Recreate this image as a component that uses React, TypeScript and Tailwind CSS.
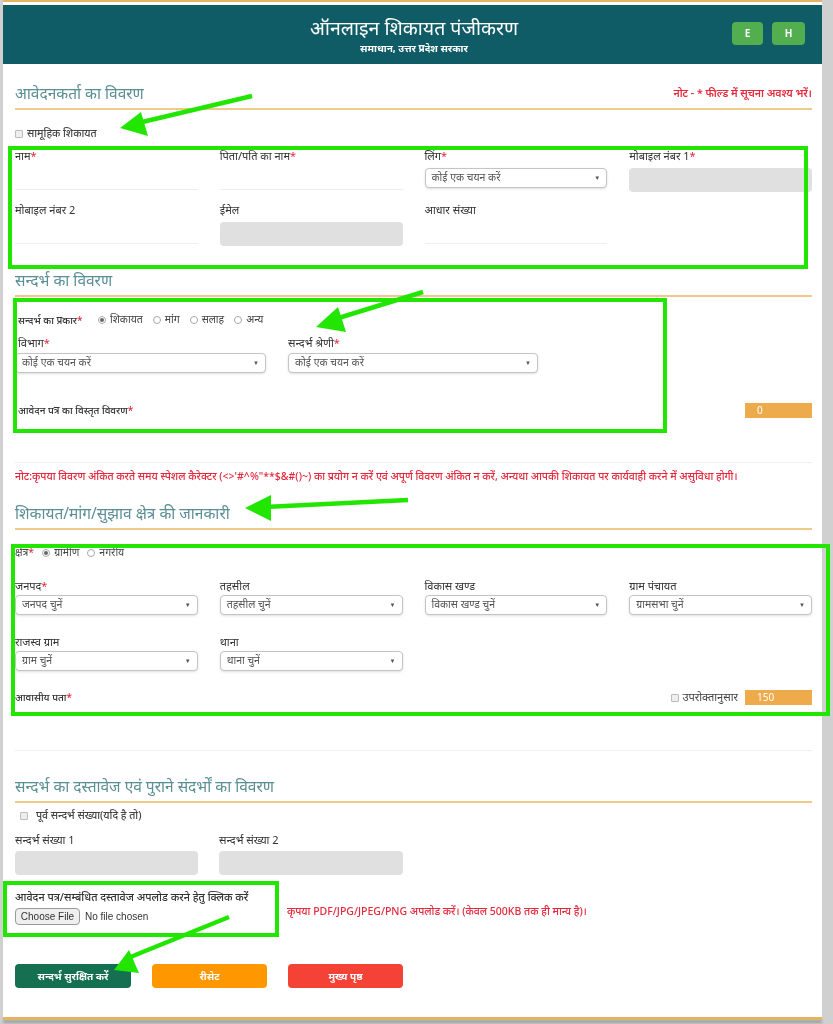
const font = { fontFamily: '"Noto Sans", "Noto Sans Devanagari", "Lohit Devanagari", "Liberation Sans", sans-serif' };

function Heading({ text, note }: { text: string; note?: boolean }) {
  return (
    <div className="flex h-[30px] items-center justify-between border-b-2 border-[#eecb8a]">
      <h2 className="text-[15.5px] font-normal text-[#5a8f95]">{text}</h2>
      {note && <p className="text-[10.5px] font-semibold text-[#e5283c]">नोट - * फील्ड में सूचना अवश्य भरें।</p>}
    </div>
  );
}

function Label({ text, req }: { text: string; req?: boolean }) {
  return (
    <p className="h-[15px] text-[11px] leading-[15px] text-[#333]">
      {text}
      {req && <span className="text-[#e5283c]">*</span>}
    </p>
  );
}

function Select({ text, className = "" }: { text: string; className?: string }) {
  return (
    <div className={`flex h-[20px] items-center justify-between rounded-sm border border-[#c4c4c4] bg-white px-1.5 shadow-sm ${className}`}>
      <span className="text-[10.5px] text-[#555]">{text}</span>
      <span className="text-[6px] text-[#555]">▼</span>
    </div>
  );
}

function Underline() {
  return <div className="mt-[9px] h-[18px] border-b border-[#eeeeee]" />;
}

function Disabled() {
  return <div className="h-[24px] rounded-sm bg-[#e0e0e0]" />;
}

function Radio({ text, on }: { text: string; on?: boolean }) {
  return (
    <span className="flex items-center gap-1 text-[10.5px] text-[#444]">
      <span className="flex h-[8px] w-[8px] items-center justify-center rounded-full border border-[#aaa] bg-white">
        {on && <span className="h-[4px] w-[4px] rounded-full bg-[#666]" />}
      </span>
      {text}
    </span>
  );
}

function Box() {
  return <span className="h-[8px] w-[8px] rounded-[1px] border border-[#bbb] bg-[#eee]" />;
}

function Counter({ value }: { value: string }) {
  return <div className="flex h-[15px] w-[67px] items-center bg-[#eeab4b] pl-3 text-[10px] text-white">{value}</div>;
}

function Arrow({ d, tip }: { d: string; tip: string }) {
  return (
    <>
      <path d={d} stroke="#22e600" strokeWidth="4.5" fill="none" />
      <polygon points={tip} fill="#22e600" />
    </>
  );
}

function Overlays() {
  return (
    <>
      <div className="absolute left-[8px] top-[146px] h-[123px] w-[800px] border-4 border-[#22e600]" />
      <div className="absolute left-[13px] top-[298px] h-[135px] w-[654px] border-4 border-[#22e600]" />
      <div className="absolute left-[11px] top-[544px] h-[172px] w-[819px] border-4 border-[#22e600]" />
      <div className="absolute left-[3px] top-[881px] h-[56px] w-[276px] border-4 border-[#22e600]" />
      <svg className="absolute left-0 top-0" width="833" height="1024">
        <Arrow d="M252 96 L138 123" tip="120,128 141,112 148,136" />
        <Arrow d="M423 292 L332 320" tip="316,327 338,307 346,332" />
        <Arrow d="M408 500 L265 507" tip="245,508 271,495 271,521" />
        <Arrow d="M229 917 L128 958" tip="114,970 129,950 139,973" />
      </svg>
    </>
  );
}

export default function App() {
  return (
    <main style={font} className="relative h-[1024px] w-[833px] overflow-hidden bg-[#d0d0d0] pl-[3px] pr-[11px]">
      <div className="h-[1017px] border-t-2 border-[#e2b463] bg-white blur-[0.4px]">
        <header className="mt-[3px] flex h-[59px] items-center bg-[#0f5c66] pl-[303px] pr-[17px]">
          <div className="w-[216px] text-center text-white">
            <h1 className="text-[19.5px] font-normal leading-[26px]">ऑनलाइन शिकायत पंजीकरण</h1>
            <p className="text-[10px] font-bold leading-[14px]">समाधान, उत्तर प्रदेश सरकार</p>
          </div>
          <div className="mb-[3px] ml-auto flex gap-[9px]">
            <span className="flex h-[23px] w-[31px] items-center justify-center rounded bg-[#53ae50] text-[10px] font-bold text-white">E</span>
            <span className="flex h-[23px] w-[33px] items-center justify-center rounded bg-[#53ae50] text-[10px] font-bold text-white">H</span>
          </div>
        </header>

        <div className="pl-[12px] pr-[10px]">
          <section className="pt-[16px]">
            <Heading text="आवेदनकर्ता का विवरण" note />
            <div className="mt-[17px] flex h-[14px] items-center gap-1 text-[10.5px] font-medium text-[#444]">
              <Box />
              सामूहिक शिकायत
            </div>
            <div className="mt-[7px] grid grid-cols-4 gap-x-[22px] gap-y-[10px]">
              <div>
                <Label text="नाम" req />
                <Underline />
              </div>
              <div>
                <Label text="पिता/पति का नाम" req />
                <Underline />
              </div>
              <div>
                <Label text="लिंग" req />
                <Select text="कोई एक चयन करें" className="mt-[5px]" />
              </div>
              <div>
                <Label text="मोबाइल नंबर 1" req />
                <div className="mt-[5px]"><Disabled /></div>
              </div>
              <div>
                <Label text="मोबाइल नंबर 2" />
                <Underline />
              </div>
              <div>
                <Label text="ईमेल" />
                <div className="mt-[5px]"><Disabled /></div>
              </div>
              <div>
                <Label text="आधार संख्या" />
                <Underline />
              </div>
            </div>
          </section>

          <section className="mt-[21px]">
            <Heading text="सन्दर्भ का विवरण" />
            <div className="mt-[16px] flex h-[14px] items-center pl-[3px]">
              <span className="w-[80px] text-[10px] font-medium text-[#333]">सन्दर्भ का प्रकार<span className="text-[#e5283c]">*</span></span>
              <div className="flex gap-[10px]">
                <Radio text="शिकायत" on />
                <Radio text="मांग" />
                <Radio text="सलाह" />
                <Radio text="अन्य" />
              </div>
            </div>
            <div className="mt-[8px] flex gap-[22px]">
              <div className="w-[251px]">
                <div className="pl-[3px]"><Label text="विभाग" req /></div>
                <Select text="कोई एक चयन करें" className="mt-[3px]" />
              </div>
              <div className="w-[250px]">
                <Label text="सन्दर्भ श्रेणी" req />
                <Select text="कोई एक चयन करें" className="mt-[3px]" />
              </div>
            </div>
            <div className="mt-[30px] flex h-[15px] items-center justify-between pl-[3px]">
              <span className="text-[10px] font-medium text-[#333]">आवेदन पत्र का विस्तृत विवरण<span className="text-[#e5283c]">*</span></span>
              <Counter value="0" />
            </div>
          </section>

          <div className="mt-[44px] border-t border-[#f0f0f0] pt-[6px] text-[10.5px] font-medium leading-[14px] text-[#e5283c]">
            नोट:कृपया विवरण अंकित करते समय स्पेशल कैरेक्टर (&lt;&gt;'#^%"**$&amp;#()~) का प्रयोग न करें एवं अपूर्ण विवरण अंकित न करें, अन्यथा आपकी शिकायत पर कार्यवाही करने में असुविधा होगी।
          </div>

          <section className="mt-[17px]">
            <Heading text="शिकायत/मांग/सुझाव क्षेत्र की जानकारी" />
            <div className="mt-[16px] flex h-[14px] items-center gap-2 text-[10.5px] text-[#444]">
              <span>क्षेत्र<span className="text-[#e5283c]">*</span></span>
              <Radio text="ग्रामीण" on />
              <Radio text="नगरीय" />
            </div>
            <div className="mt-[18px] grid grid-cols-4 gap-x-[22px] gap-y-[19px]">
              <div><Label text="जनपद" req /><Select text="जनपद चुनें" className="mt-[2px]" /></div>
              <div><Label text="तहसील" /><Select text="तहसील चुनें" className="mt-[2px]" /></div>
              <div><Label text="विकास खण्ड" /><Select text="विकास खण्ड चुनें" className="mt-[2px]" /></div>
              <div><Label text="ग्राम पंचायत" /><Select text="ग्रामसभा चुनें" className="mt-[2px]" /></div>
              <div><Label text="राजस्व ग्राम" /><Select text="ग्राम चुनें" className="mt-[2px]" /></div>
              <div><Label text="थाना" /><Select text="थाना चुनें" className="mt-[2px]" /></div>
            </div>
            <div className="mt-[19px] flex h-[15px] items-center justify-between">
              <span className="text-[10px] font-medium text-[#333]">आवासीय पता<span className="text-[#e5283c]">*</span></span>
              <div className="flex items-center text-[11px] text-[#444]">
                <Box />
                <span className="ml-[3px] mr-[7px]">उपरोक्तानुसार</span>
                <Counter value="150" />
              </div>
            </div>
          </section>

          <section className="mt-[45px] border-t border-[#f0f0f0] pt-[22px]">
            <Heading text="सन्दर्भ का दस्तावेज एवं पुराने संदर्भों का विवरण" />
            <div className="mt-[6px] flex h-[14px] items-center gap-2 pl-[5px] text-[10.5px] font-medium text-[#444]">
              <Box />
              पूर्व सन्दर्भ संख्या(यदि है तो)
            </div>
            <div className="mt-[9px] flex gap-[21px]">
              <div className="w-[183px]">
                <Label text="सन्दर्भ संख्या 1" />
                <div className="mt-[4px]"><Disabled /></div>
              </div>
              <div className="w-[184px]">
                <Label text="सन्दर्भ संख्या 2" />
                <div className="mt-[4px]"><Disabled /></div>
              </div>
            </div>
            <div className="mt-[14px] flex">
              <div className="w-[272px]">
                <p className="h-[15px] text-[10.8px] font-medium leading-[15px] text-[#333]">आवेदन पत्र/सम्बंधित दस्तावेज अपलोड करने हेतु क्लिक करें</p>
                <div className="mt-[4px] flex items-center gap-[5px] text-[10px] text-[#333]" style={{ fontFamily: '"Liberation Sans", sans-serif' }}>
                  <span className="flex h-[17px] w-[65px] items-center justify-center rounded-sm border border-[#999] bg-[#efefef]">Choose File</span>
                  No file chosen
                </div>
              </div>
              <p className="mb-[5px] self-end text-[10.5px] font-medium text-[#e5283c]">कृपया PDF/JPG/JPEG/PNG अपलोड करें। (केवल 500KB तक ही मान्य है)।</p>
            </div>
            <div className="mt-[39px] flex gap-[21px] text-[10px] font-bold text-white">
              <span className="flex h-[24px] w-[116px] items-center justify-center rounded bg-[#147050]">सन्दर्भ सुरक्षित करें</span>
              <span className="flex h-[24px] w-[115px] items-center justify-center rounded bg-[#ff9800]">रीसेट</span>
              <span className="flex h-[24px] w-[115px] items-center justify-center rounded bg-[#f44336]">मुख्य पृष्ठ</span>
            </div>
          </section>
        </div>
      </div>
      <div className="h-[3px] bg-[#e2b463] shadow-[0_3px_3px_#999]" />
      <Overlays />
    </main>
  );
}
